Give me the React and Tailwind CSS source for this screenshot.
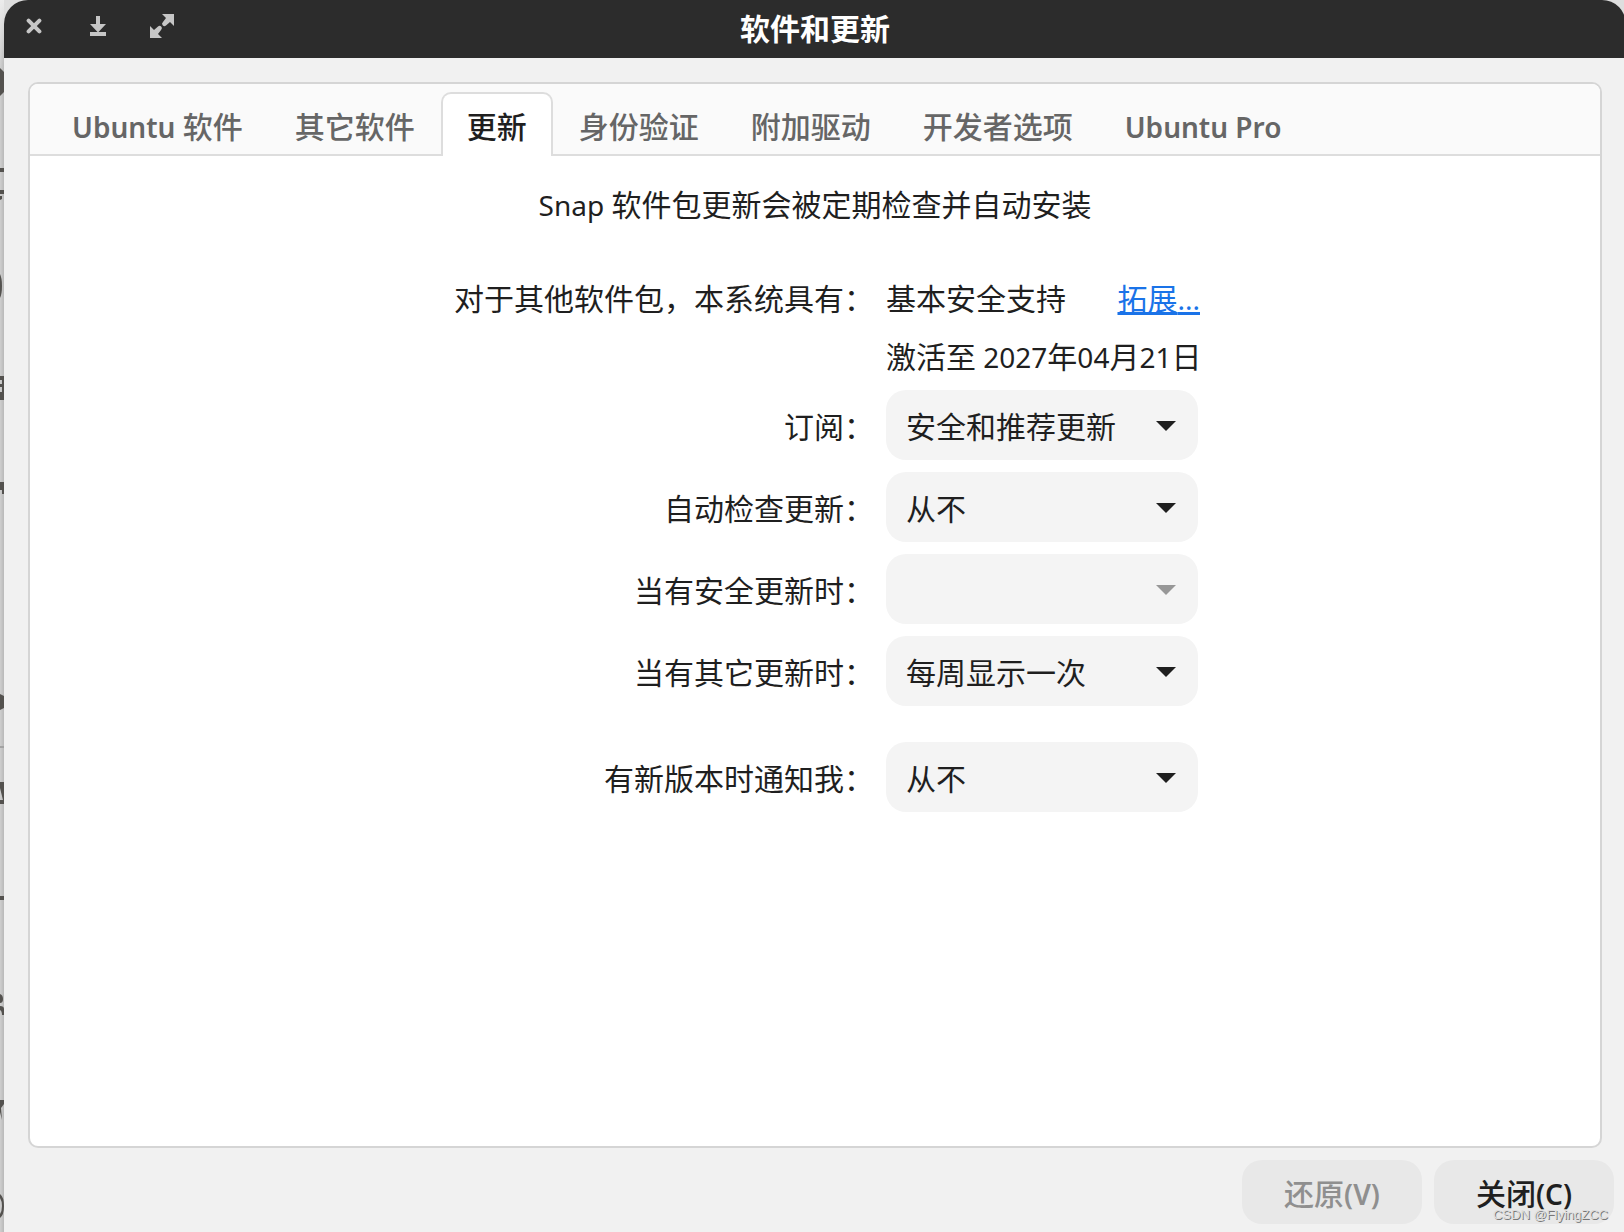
import React, { useState } from "react";

const INK = "#1f1f1f";

function Latin({ children }) {
  return <span className="font-['Noto_Sans',sans-serif] text-[28px] leading-none">{children}</span>;
}

function LatinStrong({ children }) {
  return <span className="font-['Noto_Sans',sans-serif] text-[28px] leading-none font-semibold">{children}</span>;
}

function CloseIcon() {
  return (
    <svg viewBox="0 0 16 16" className="size-4" fill="none" stroke="currentColor" strokeWidth="4" strokeLinecap="round">
      <path d="M2.600 2.600 13.400 13.400M13.400 2.600 2.600 13.400" />
    </svg>
  );
}

function MinimizeIcon() {
  return (
    <svg viewBox="0 0 16 20" className="h-5 w-4" fill="currentColor">
      <path d="M6 0h4v8h6l-8 8.4L0 8h6zM0 16h16v4H0z" />
    </svg>
  );
}

function MaximizeIcon() {
  return (
    <svg viewBox="0 0 24 24" className="size-6" fill="currentColor">
      <path d="M12 0h12v12l-4-4-4 3.400a2.100 2.100 0 0 1-3.200-3.200L16 4zM0 24V12l4 4 4-3.400a2.100 2.100 0 0 1 3.200 3.200L8 20l4 4z" />
    </svg>
  );
}

/* Sliver of the window that lies behind this one. */
function BackgroundWindow() {
  return (
    <svg aria-hidden="true" viewBox="0 0 4 1232" preserveAspectRatio="none" className="absolute inset-y-0 left-0 h-full w-1">
      <defs>
        <linearGradient id="edge" x1="0" x2="1" y1="0" y2="0">
          <stop offset="0" stopColor="#cfcfcf" />
          <stop offset="1" stopColor="#b9b9b9" />
        </linearGradient>
        <linearGradient id="topfade" x1="0" x2="0" y1="0" y2="1">
          <stop offset="0" stopColor="#ececec" />
          <stop offset="1" stopColor="#ececec" stopOpacity="0" />
        </linearGradient>
      </defs>
      <rect width="4" height="1232" fill="url(#edge)" />
      <rect width="4" height="70" fill="url(#topfade)" />
      <g fill="#54524f">
        <path d="M0 68 4 72V92L0 96z" />
        <path d="M0 168h4v4H0zM0 190h4v4H0zM0 196h2v3L0 200z" />
        <path d="M0 274Q2 278 2 286T0 298z" />
        <path fillRule="evenodd" d="M0 376h4v24H0zM0 380h2v4H0zM0 387h2v5H0z" />
        <path d="M0 482h4v12H2v-4H0z" />
        <path d="M0 694 4 696V708L0 710z" />
        <path fillRule="evenodd" d="M0 782h4v22H0zM0 800V788L3 800z" />
        <path d="M0 896h4v4H0z" />
        <path d="M0 994Q3 995 3 999T0 1003zM0 1006q4 0 4 3v6H2q0-4-2-5z" />
        <path d="M0 1100h4v4l-3 4 1 12-2-8z" />
        <path fillRule="evenodd" d="M0 1194q4 3 4 12t-4 12v-4q2-3 2-8t-2-8z" />
      </g>
      <rect y="746" width="4" height="2" fill="#a3a3a3" />
    </svg>
  );
}

const TABS = [
  { id: "ubuntu", label: <><LatinStrong>Ubuntu </LatinStrong>软件</> },
  { id: "other", label: "其它软件" },
  { id: "updates", label: "更新" },
  { id: "auth", label: "身份验证" },
  { id: "drivers", label: "附加驱动" },
  { id: "developer", label: "开发者选项" },
  { id: "pro", label: <LatinStrong>Ubuntu Pro</LatinStrong> },
];

function Tab({ active, label, onClick }) {
  return (
    <button
      type="button"
      role="tab"
      aria-selected={active}
      onClick={onClick}
      className={
        active
          ? "-mb-0.5 h-16 whitespace-nowrap rounded-t-[10px] border-2 border-b-0 border-[#dddddd] bg-white px-6 font-medium text-[#1f1f1f]"
          : "-mb-0.5 h-16 whitespace-nowrap border-2 border-b-0 border-transparent px-6 font-medium text-[#666666]"
      }
    >
      {label}
    </button>
  );
}

function SelectRow({ id, label, options, disabled = false, spaced = false }) {
  return (
    <>
      <label htmlFor={id} className={spaced ? "mt-6 self-center text-right" : "self-center text-right"}>
        {label}
      </label>
      <div className={spaced ? "relative mt-6 w-[312px]" : "relative w-[312px]"}>
        <select
          id={id}
          disabled={disabled}
          className="block h-[70px] w-full appearance-none rounded-[20px] bg-[#f4f4f4] pr-14 pl-5 text-[#1f1f1f] opacity-100"
        >
          {options.map((o) => (
            <option key={o}>{o}</option>
          ))}
        </select>
        <svg
          aria-hidden="true"
          viewBox="0 0 20 10"
          className="pointer-events-none absolute top-[31px] right-[22px] h-2.5 w-5"
          fill={disabled ? "#979797" : INK}
        >
          <path d="M0 0h20L10 10z" />
        </svg>
      </div>
    </>
  );
}

export default function App() {
  const [tab, setTab] = useState("updates");
  return (
    <div
      lang="zh-CN"
      className="relative flex min-h-screen flex-col overflow-hidden bg-[#dedede] pl-1 font-['Noto_Sans_CJK_SC',sans-serif] text-[30px] leading-[46px] text-[#1f1f1f]"
    >
      <BackgroundWindow />
      <div className="relative -mr-0.5 flex flex-1 flex-col rounded-t-[24px] bg-[#f1f1f1]">
        <header className="grid h-[58px] grid-cols-[1fr_auto_1fr] items-center rounded-t-[24px] bg-[#2c2c2c] pb-1">
          <div className="flex h-[52px] items-center gap-6 self-start pl-2.5 text-[#c6c6c6]">
            <button type="button" aria-label="关闭窗口" className="flex size-10 items-center justify-center">
              <CloseIcon />
            </button>
            <button type="button" aria-label="最小化" className="flex size-10 items-center justify-center">
              <MinimizeIcon />
            </button>
            <button type="button" aria-label="最大化" className="flex size-10 items-center justify-center">
              <MaximizeIcon />
            </button>
          </div>
          <h1 className="font-bold text-white">软件和更新</h1>
        </header>

        <main className="mx-6 mt-6 flex flex-1 flex-col overflow-hidden rounded-[10px] border-2 border-[#d5d5d5] bg-white">
          <div role="tablist" className="flex h-[72px] items-end border-b-2 border-[#dddddd] bg-[#fafafa] px-4">
            {TABS.map((t) => (
              <Tab key={t.id} label={t.label} active={t.id === tab} onClick={() => setTab(t.id)} />
            ))}
          </div>

          <section role="tabpanel" className="flex flex-col items-center pt-6">
            <p>
              <Latin>Snap </Latin>软件包更新会被定期检查并自动安装
            </p>
            <div className="mt-12 grid grid-cols-[444px_314px] gap-3">
              <span className="text-right">对于其他软件包，本系统具有：</span>
              <div className="flex justify-between whitespace-nowrap">
                <span>基本安全支持</span>
                <a href="#extend" className="text-[#1a73e8] underline">
                  拓展<Latin>...</Latin>
                </a>
              </div>
              <span className="col-start-2 whitespace-nowrap">
                激活至<Latin> 2027</Latin>年<Latin>04</Latin>月<Latin>21</Latin>日
              </span>
              <SelectRow id="subscribe" label="订阅：" options={["安全和推荐更新", "仅安全更新", "所有更新"]} />
              <SelectRow id="check" label="自动检查更新：" options={["从不", "每天", "每周"]} />
              <SelectRow id="security" label="当有安全更新时：" options={[""]} disabled />
              <SelectRow id="others" label="当有其它更新时：" options={["每周显示一次", "立即显示"]} />
              <SelectRow id="release" label="有新版本时通知我：" options={["从不", "适用任何新版本"]} spaced />
            </div>
          </section>
        </main>

        <footer className="flex justify-end gap-3 px-3 pt-3 pb-2 font-medium">
          <button type="button" disabled className="h-16 w-[180px] rounded-[20px] bg-[#e8e8e8] text-[#8f8f8f]">
            还原<LatinStrong>(V)</LatinStrong>
          </button>
          <button type="button" className="h-16 w-[180px] rounded-[20px] bg-[#e8e8e8]">
            关闭<LatinStrong>(C)</LatinStrong>
          </button>
        </footer>
      </div>
      <span className="absolute right-4 bottom-[7px] font-['Liberation_Sans',sans-serif] text-[13px] leading-5 text-[#dddddd] [text-shadow:1px_1px_0_#777]">
        CSDN @FlyingZCC
      </span>
    </div>
  );
}
